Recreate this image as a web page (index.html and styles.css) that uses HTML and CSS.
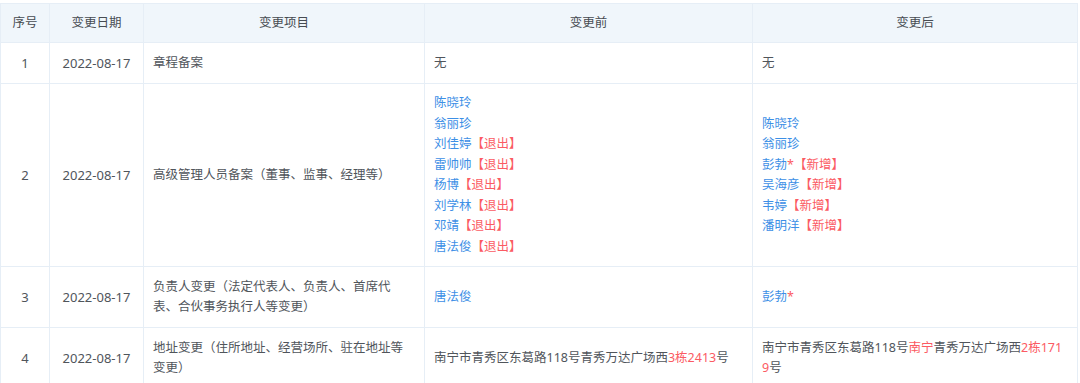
FILE: index.html
```html
<!DOCTYPE html>
<html lang="zh-CN">
<head>
<meta charset="utf-8">
<title>变更记录</title>
<link rel="stylesheet" href="styles.css">
</head>
<body>
<div class="page">
<table class="changes">
  <colgroup>
    <col class="c-no"><col class="c-date"><col class="c-item"><col class="c-before"><col class="c-after">
  </colgroup>
  <thead>
    <tr><th>序号</th><th>变更日期</th><th>变更项目</th><th>变更前</th><th>变更后</th></tr>
  </thead>
  <tbody>
    <tr>
      <td class="center">1</td>
      <td class="center">2022-08-17</td>
      <td>章程备案</td>
      <td>无</td>
      <td>无</td>
    </tr>
    <tr>
      <td class="center">2</td>
      <td class="center">2022-08-17</td>
      <td>高级管理人员备案（董事、监事、经理等）</td>
      <td class="list-cell">
        <div class="names">
          <div class="name">陈晓玲</div>
          <div class="name">翁丽珍</div>
          <div class="name">刘佳婷<span class="tag">【退出】</span></div>
          <div class="name">雷帅帅<span class="tag">【退出】</span></div>
          <div class="name">杨博<span class="tag">【退出】</span></div>
          <div class="name">刘学林<span class="tag">【退出】</span></div>
          <div class="name">邓靖<span class="tag">【退出】</span></div>
          <div class="name">唐法俊<span class="tag">【退出】</span></div>
        </div>
      </td>
      <td class="list-cell">
        <div class="names">
          <div class="name">陈晓玲</div>
          <div class="name">翁丽珍</div>
          <div class="name">彭勃<span class="star">*</span><span class="tag">【新增】</span></div>
          <div class="name">吴海彦<span class="tag">【新增】</span></div>
          <div class="name">韦婷<span class="tag">【新增】</span></div>
          <div class="name">潘明洋<span class="tag">【新增】</span></div>
        </div>
      </td>
    </tr>
    <tr>
      <td class="center">3</td>
      <td class="center">2022-08-17</td>
      <td>负责人变更（法定代表人、负责人、首席代表、合伙事务执行人等变更）</td>
      <td><span class="name">唐法俊</span></td>
      <td><span class="name">彭勃</span><span class="star">*</span></td>
    </tr>
    <tr>
      <td class="center">4</td>
      <td class="center">2022-08-17</td>
      <td>地址变更（住所地址、经营场所、驻在地址等变更）</td>
      <td><span>南宁市青秀区东葛路118号青秀万达广场西</span><span class="hl">3栋2413</span><span>号</span></td>
      <td class="breakall"><span class="addr-line"><span>南宁市青秀区东葛路118号</span><span class="hl">南宁</span><span>青秀万达广场西</span><span class="hl">2栋171</span></span><span class="addr-line"><span class="hl">9</span><span>号</span></span></td>
    </tr>
  </tbody>
</table>
</div>
</body>
</html>
```

FILE: styles.css
```css
html, body {
  margin: 0;
  padding: 0;
  background: #ffffff;
}
body {
  font-family: "Noto Sans", "Noto Sans CJK SC", sans-serif;
  font-size: 12.5px;
  color: #50555b;
}
.page {
  padding-top: 3px;
  width: 1077px;
}
.changes {
  width: 1077px;
  border-collapse: collapse;
  table-layout: fixed;
}
.c-no { width: 49px; }
.c-date { width: 94px; }
.c-item { width: 281px; }
.c-before { width: 328px; }
.c-after { width: 325px; }

.changes th,
.changes td {
  border: 1px solid #e6eef6;
  line-height: 20px;
}
.changes th {
  background: #f0f6fb;
  font-weight: normal;
  color: #474c52;
  height: 38px;
  padding: 0 9px;
  text-align: center;
}
.changes td {
  padding: 10px 9px;
  vertical-align: middle;
  text-align: left;
}
.changes td.center {
  text-align: center;
  padding: 10px 2px;
  font-size: 13px;
}
.changes td.list-cell {
  padding: 9px 9px;
}
.names {
  display: flex;
  flex-direction: column;
}
.names .name {
  line-height: 20.5px;
}
.name {
  color: #3d8fe6;
}
.tag, .star, .hl {
  color: #fb5b63;
}
.breakall {
  word-break: break-all;
}
.addr-line {
  display: block;
}
```
